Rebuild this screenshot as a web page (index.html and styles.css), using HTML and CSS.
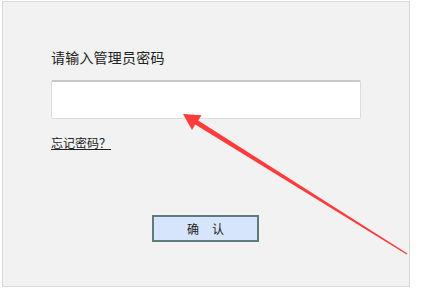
FILE: index.html
```html
<!DOCTYPE html>
<html lang="zh-CN">
<head>
<meta charset="utf-8">
<link rel="stylesheet" href="styles.css">
</head>
<body>
<div class="panel">
  <div class="form">
    <div class="label">请输入管理员密码</div>
    <div class="input"></div>
    <a class="forgot" href="#">忘记密码？</a>
    <div class="actions">
      <button class="btn">确<span class="gap"></span>认</button>
    </div>
  </div>
</div>
<svg class="arrow" width="431" height="288" viewBox="0 0 431 288">
  <polygon fill="#ff3b3b" points="183,114 201.5,115.3 198.2,120.6 407.4,253.6 406.6,254.4 195.2,124.6 192,130"/>
</svg>
</body>
</html>
```
FILE: styles.css
```css
html, body {
  margin: 0;
  padding: 0;
  background: #ffffff;
}
body {
  position: relative;
  width: 431px;
  height: 288px;
  overflow: hidden;
  font-family: "Noto Sans CJK SC", "Noto Sans", sans-serif;
  color: #222;
}
.panel {
  box-sizing: border-box;
  margin: 1px 0 0 2px;
  width: 408px;
  height: 286px;
  border: 1px solid #d9d9d9;
  background: #f2f2f2;
  padding: 45px 0 0 48px;
}
.form {
  display: flex;
  flex-direction: column;
  align-items: flex-start;
  width: 310px;
}
.label {
  font-size: 14px;
  line-height: 20px;
  letter-spacing: 0.2px;
  color: #222;
}
.input {
  box-sizing: border-box;
  margin-top: 13px;
  width: 310px;
  height: 39px;
  background: #fff;
  border: 1px solid #dcdcdc;
  border-top: 2px solid #c8c8c8;
  border-radius: 2px;
}
.forgot {
  margin-top: 16px;
  font-size: 12px;
  line-height: 16px;
  color: #222;
  text-decoration: underline;
}
.actions {
  align-self: stretch;
  display: flex;
  justify-content: center;
  margin-top: 64px;
}
.btn {
  box-sizing: border-box;
  display: flex;
  align-items: center;
  justify-content: center;
  width: 107px;
  height: 27px;
  margin-left: -1px;
  padding: 0;
  border: 2px solid #5f7c7c;
  background: #d6e5fb;
  font-family: "Noto Sans CJK SC", "Noto Sans", sans-serif;
  font-size: 12px;
  color: #222;
}
.gap {
  display: inline-block;
  width: 13px;
}
.arrow {
  position: absolute;
  left: 0;
  top: 0;
  pointer-events: none;
}
```
